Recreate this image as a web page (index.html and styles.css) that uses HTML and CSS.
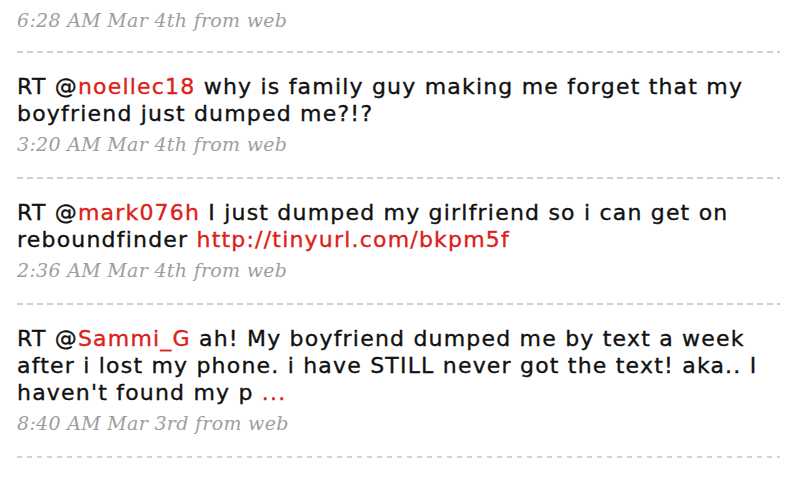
FILE: index.html
```html
<!DOCTYPE html>
<html>
<head>
<meta charset="utf-8">
<link rel="stylesheet" href="styles.css">
</head>
<body>
<ol class="timeline">
  <li class="status first">
    <span class="meta">6:28 AM Mar 4th from web</span>
  </li>
  <li class="status">
    <p class="entry">RT @<a class="user" href="#">noellec18</a> why is family guy making me forget that my boyfriend just dumped me?!?</p>
    <span class="meta">3:20 AM Mar 4th from web</span>
  </li>
  <li class="status">
    <p class="entry">RT @<a class="user" href="#">mark076h</a> I just dumped my girlfriend so i can get on reboundfinder <a class="link" href="#">http://tinyurl.com/bkpm5f</a></p>
    <span class="meta">2:36 AM Mar 4th from web</span>
  </li>
  <li class="status last">
    <p class="entry">RT @<a class="user" href="#">Sammi_G</a> ah! My boyfriend dumped me by text a week after i lost my phone. i have STILL never got the text! aka.. I haven't found my p <a class="link" href="#">...</a></p>
    <span class="meta">8:40 AM Mar 3rd from web</span>
  </li>
</ol>
</body>
</html>
```

FILE: styles.css
```css
html, body {
  margin: 0;
  padding: 0;
  background: #ffffff;
}
body {
  width: 800px;
  height: 480px;
  overflow: hidden;
}
.timeline {
  list-style: none;
  margin: 0;
  padding: 0 0 0 17px;
  width: 763px;
}
.status {
  padding: 20px 0 24px 0;
  background-image: repeating-linear-gradient(to right, #cfcfcf 0, #cfcfcf 6px, transparent 6px, transparent 10px);
  background-size: 100% 2px;
  background-repeat: no-repeat;
  background-position: left bottom;
}
.status.first {
  padding-top: 9px;
  padding-bottom: 22px;
}
.status.last {
  background-image: repeating-linear-gradient(to right, #d4d4d4 0, #d4d4d4 5px, transparent 5px, transparent 10px);
}
.entry {
  margin: 0;
  font-family: "DejaVu Sans", Verdana, sans-serif;
  font-size: 22px;
  letter-spacing: 1.2px;
  line-height: 27px;
  color: #111111;
  -webkit-text-stroke: 0.35px #111111;
}
.entry a {
  text-decoration: none;
  color: #dc2119;
  -webkit-text-stroke: 0.35px #dc2119;
}
.meta {
  display: block;
  margin-top: 6px;
  font-family: "DejaVu Serif", Georgia, serif;
  font-style: italic;
  font-size: 19px;
  letter-spacing: 0.3px;
  line-height: 22px;
  color: #9e9e9e;
}
.first .meta {
  margin-top: 0;
}
```
